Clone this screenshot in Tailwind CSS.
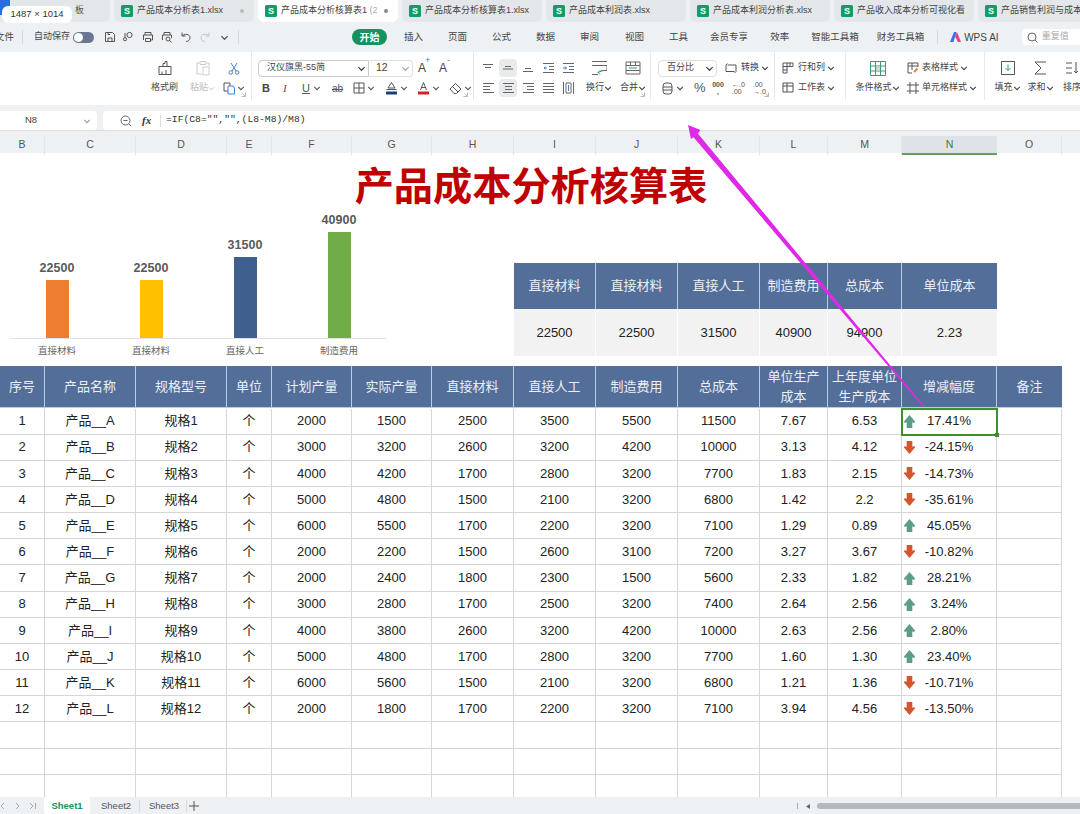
<!DOCTYPE html>
<html lang="zh-CN">
<head>
  <meta charset="UTF-8">
  <title>产品成本分析核算表</title>
  <script src="https://cdn.jsdelivr.net/npm/@tailwindcss/browser@4"></script>
</head>
<body class="relative w-[1080px] h-[814px] overflow-hidden bg-white text-[#444] font-['Liberation_Sans','Noto_Sans_CJK_SC',sans-serif]">
  <svg class="hidden">
    <defs>
      <symbol id="chev" viewBox="0 0 8 8"><path d="M1.2 2.8 4 5.6 6.8 2.8" fill="none" stroke="currentColor" stroke-width="1.1"/></symbol>
      <symbol id="xls" viewBox="0 0 12 12"><rect width="12" height="12" rx="1.5" fill="#0f9d6b"/><text x="6" y="9.4" text-anchor="middle" font-size="9" font-weight="700" fill="#fff" font-family="Liberation Sans">S</text></symbol>
      <symbol id="launch" viewBox="0 0 5 5"><path d="M0.5 4.5H4.5V0.5M1.5 1.5 4 4" fill="none" stroke="#999" stroke-width="0.7"/></symbol>
      <symbol id="up" viewBox="0 0 11 13"><path d="M5.5 0 11 6.5C11 8 9.5 8.3 8.3 7.2V13H2.7V7.2C1.5 8.3 0 8 0 6.5Z" fill="#5c9c8a"/></symbol>
      <symbol id="down" viewBox="0 0 11 13"><path d="M5.5 13 11 6.5C11 5 9.5 4.7 8.3 5.8V0H2.7V5.8C1.5 4.7 0 5 0 6.5Z" fill="#d3562f"/></symbol>
    </defs>
  </svg>

  <!-- Tabs -->
  <div class="h-[22px] bg-[#eef1f4] overflow-hidden">
    <div class="flex gap-1 ml-[-30px] w-[1200px] text-[9px]">
      <div class="w-[140px] h-[22px] rounded-b-md bg-[#e4e7ea] flex items-center pl-[105px] text-[#555]">板</div>
      <div class="w-[140px] h-[22px] rounded-b-md bg-[#e4e7ea] flex items-center pl-[7px] gap-[4px]"><svg class="w-3 h-3 shrink-0"><use href="#xls"/></svg><span class="flex-1 overflow-hidden whitespace-nowrap">产品成本分析表1.xlsx</span><span class="w-1 h-1 rounded-full bg-[#bbb] mr-[10px]"></span></div>
      <div class="w-[140px] h-[22px] rounded-b-md bg-white flex items-center pl-[7px] gap-[4px]"><svg class="w-3 h-3 shrink-0"><use href="#xls"/></svg><span class="flex-1 overflow-hidden whitespace-nowrap">产品成本分析核算表1 <span class="text-[#aaa]">(2</span></span><span class="w-1 h-1 rounded-full bg-[#888] mr-[10px]"></span></div>
      <div class="w-[140px] h-[22px] rounded-b-md bg-[#e4e7ea] flex items-center pl-[7px] gap-[4px]"><svg class="w-3 h-3 shrink-0"><use href="#xls"/></svg><span class="overflow-hidden whitespace-nowrap">产品成本分析核算表1.xlsx</span></div>
      <div class="w-[140px] h-[22px] rounded-b-md bg-[#e4e7ea] flex items-center pl-[7px] gap-[4px]"><svg class="w-3 h-3 shrink-0"><use href="#xls"/></svg><span class="overflow-hidden whitespace-nowrap">产品成本利润表.xlsx</span></div>
      <div class="w-[140px] h-[22px] rounded-b-md bg-[#e4e7ea] flex items-center pl-[7px] gap-[4px]"><svg class="w-3 h-3 shrink-0"><use href="#xls"/></svg><span class="overflow-hidden whitespace-nowrap">产品成本利润分析表.xlsx</span></div>
      <div class="w-[140px] h-[22px] rounded-b-md bg-[#e4e7ea] flex items-center pl-[7px] gap-[4px]"><svg class="w-3 h-3 shrink-0"><use href="#xls"/></svg><span class="overflow-hidden whitespace-nowrap">产品收入成本分析可视化看</span></div>
      <div class="w-[140px] h-[22px] rounded-b-md bg-[#e4e7ea] flex items-center pl-[7px] gap-[4px]"><svg class="w-3 h-3 shrink-0"><use href="#xls"/></svg><span class="overflow-hidden whitespace-nowrap">产品销售利润与成本分析</span></div>
    </div>
  </div>

  <!-- Menu bar -->
  <div class="h-[30px] bg-[#eef1f4] flex items-center overflow-hidden text-[9.5px] text-[#444] whitespace-nowrap [&>*]:shrink-0">
    <span class="w-[14px] overflow-hidden flex justify-end">文件</span>
    <span class="w-px h-[14px] bg-[#d8dbde] ml-[8px]"></span>
    <span class="ml-[11px] w-[39px] text-[9px]">自动保存</span>
    <span class="w-[21px] h-[11px] rounded-full bg-[#6b7694] flex items-center"><span class="w-[9px] h-[9px] rounded-full bg-white ml-px"></span></span>
    <svg class="w-[12px] h-[12px] ml-[10px]" viewBox="0 0 12 12" fill="none" stroke="#555"><path d="M1.5 1.5H8.5L10.5 3.5V10.5H1.5ZM4 10.5V7H8V10.5M4 1.5V3.5H6"/></svg>
    <svg class="w-[12px] h-[12px] ml-[6px]" viewBox="0 0 12 12" fill="none" stroke="#555"><circle cx="7.5" cy="4" r="2.6"/><circle cx="3" cy="8.2" r="1.6"/><path d="M3 6.6V2"/></svg>
    <svg class="w-[12px] h-[12px] ml-[8px]" viewBox="0 0 12 12" fill="none" stroke="#555"><path d="M3 4V1.5H9V4M1.5 9V4H10.5V9H8.5M3.5 7.5H8.5V10.5H3.5Z"/></svg>
    <svg class="w-[12px] h-[12px] ml-[7px]" viewBox="0 0 12 12" fill="none" stroke="#555"><path d="M3 4V1.5H9V4M1.5 9V4H10.5V7"/><circle cx="7" cy="8" r="2"/><path d="M8.5 9.5 10.5 11.2"/></svg>
    <svg class="w-[12px] h-[12px] ml-[7px]" viewBox="0 0 12 12" fill="none" stroke="#555"><path d="M2 1.5V5H5.5M2 5C4 2.5 10.5 2.5 10 7 9.8 9 8 10.5 6 10.5"/></svg>
    <svg class="w-[12px] h-[12px] ml-[7px]" viewBox="0 0 12 12" fill="none" stroke="#c5c8cb"><path d="M10 1.5V5H6.5M10 5C8 2.5 1.5 2.5 2 7 2.2 9 4 10.5 6 10.5"/></svg>
    <svg class="w-[9px] h-[9px] ml-[9px] text-[#555]"><use href="#chev"/></svg>
    <span class="w-px h-[14px] bg-[#d8dbde] ml-[9px]"></span>
    <span class="ml-[113px] w-[35px] h-[16px] rounded-full bg-[#17915f] text-white font-bold text-[10px] flex items-center justify-center">开始</span>
    <span class="ml-[17px]">插入</span>
    <span class="ml-[25px]">页面</span>
    <span class="ml-[25px]">公式</span>
    <span class="ml-[25px]">数据</span>
    <span class="ml-[25px]">审阅</span>
    <span class="ml-[26px]">视图</span>
    <span class="ml-[25px]">工具</span>
    <span class="ml-[22px]">会员专享</span>
    <span class="ml-[22px]">效率</span>
    <span class="ml-[22px]">智能工具箱</span>
    <span class="ml-[18px]">财务工具箱</span>
    <span class="w-px h-[14px] bg-[#d8dbde] ml-[13px]"></span>
    <svg class="w-[11px] h-[10px] ml-[12px]" viewBox="0 0 11 10"><path d="M0 10 4 0H6.5L3.5 10Z" fill="#3b6ff0"/><path d="M5 4.5 7 0 11 10H8Z" fill="#e0457b"/></svg>
    <span class="ml-[3px] text-[10px]">WPS AI</span>
    <span class="ml-[23px] w-[62px] h-[16px] rounded-l bg-white flex items-center pl-[5px] gap-[4px] text-[9px] text-[#aaa]"><svg class="w-[11px] h-[11px] shrink-0" viewBox="0 0 11 11" fill="none" stroke="#666"><circle cx="5" cy="5" r="4"/><path d="M8 8 10.5 10.5"/></svg>重复值</span>
  </div>

  <!-- Ribbon -->
  <div class="h-[53px] bg-white flex text-[9px] text-[#444] whitespace-nowrap">
    <div class="w-[150px] shrink-0"></div>

    <div class="w-[102px] shrink-0 h-[48px] border-r border-[#e6e8ea] relative flex pt-[6px]">
      <div class="w-[27px] ml-px grid grid-rows-[20px_20px] justify-items-center items-center">
        <svg class="w-[16px] h-[16px]" viewBox="0 0 16 16" fill="none" stroke="#555"><path d="M2 6.5H14V14.5H2ZM6 6.5V3.5H8V1.5H10V6.5M5 14.5V11.5M9 14.5V10"/></svg>
        <span>格式刷</span>
      </div>
      <div class="w-[33px] ml-[8px] grid grid-rows-[20px_20px] justify-items-center items-center text-[#bbb]">
        <svg class="w-[16px] h-[16px]" viewBox="0 0 16 16" fill="none" stroke="#ccc"><path d="M4.5 3H2V14H7M11.5 3H14V6M5 4.5V1.5H11V4.5ZM8 7H14V15H8Z"/></svg>
        <span class="flex items-center">粘贴<svg class="w-[7px] h-[7px]"><use href="#chev"/></svg></span>
      </div>
      <div class="w-[30px] grid grid-rows-[20px_20px] justify-items-center items-center">
        <svg class="w-[12px] h-[13px]" viewBox="0 0 12 13" fill="none" stroke="#4a7fc4"><path d="M3 1 8 9M9 1 4 9"/><circle cx="2.8" cy="10.5" r="1.8"/><circle cx="9.2" cy="10.5" r="1.8"/></svg>
        <span class="flex items-center gap-[2px]"><svg class="w-[12px] h-[13px]" viewBox="0 0 12 13" fill="none" stroke="#555"><path d="M1 1H7V9H1Z"/><path d="M5 4H10L11.5 6V12H5Z" stroke="#3f7ed8" fill="#fff"/></svg><svg class="w-[8px] h-[8px] text-[#555]"><use href="#chev"/></svg></span>
      </div>
      <svg class="absolute right-[5px] bottom-[3px] w-[5px] h-[5px]"><use href="#launch"/></svg>
    </div>

    <div class="w-[222px] shrink-0 h-[48px] border-r border-[#e6e8ea] relative pt-[6px] grid grid-rows-[20px_20px]">
      <div class="flex items-center pl-[6px]">
        <div class="w-[111px] h-[17px] border border-[#c9cccf] rounded-l flex items-center pl-[8px] pr-[2px] justify-between">汉仪旗黑-55简<svg class="w-[9px] h-[9px]"><use href="#chev"/></svg></div>
        <div class="w-[44px] h-[17px] border border-l-0 border-[#dcdfe2] rounded-r flex items-center pl-[7px] pr-[2px] justify-between text-[10.5px]">12<svg class="w-[9px] h-[9px] text-[#aaa]"><use href="#chev"/></svg></div>
        <span class="ml-[5px] text-[12px] w-[14px] relative">A<span class="absolute top-[-5px] left-[7px] text-[9px] text-[#3f7ed8]">+</span></span>
        <span class="ml-[7px] text-[12px] w-[14px] relative">A<span class="absolute top-[-5px] left-[8px] text-[9px] text-[#777]">-</span></span>
      </div>
      <div class="flex items-center text-[#555]">
        <span class="ml-[10px] w-[8px] font-bold text-[11px] text-[#444]">B</span>
        <span class="ml-[13px] w-[6px] italic text-[11px] font-['Liberation_Serif']">I</span>
        <span class="ml-[13px] w-[8px] underline text-[11px]">U</span>
        <svg class="w-[8px] h-[8px] ml-[3px]"><use href="#chev"/></svg>
        <span class="ml-[11px] w-[13px] line-through text-[10px]">ab</span>
        <svg class="w-[12px] h-[12px] ml-[8px]" viewBox="0 0 12 12" fill="none" stroke="#555"><path d="M1 1H11V11H1ZM6 1V11M1 6H11"/></svg>
        <svg class="w-[8px] h-[8px] ml-[2px]"><use href="#chev"/></svg>
        <svg class="w-[13px] h-[14px] ml-[10px]" viewBox="0 0 13 14"><path d="M3 7 6.5 1.5 10 7Z" fill="none" stroke="#555"/><path d="M1.5 8.5H11.5" stroke="#555"/><rect x="1" y="10.5" width="11" height="3" fill="#1c3f7c"/></svg>
        <svg class="w-[8px] h-[8px] ml-[2px]"><use href="#chev"/></svg>
        <svg class="w-[13px] h-[14px] ml-[9px]" viewBox="0 0 13 14"><path d="M3.5 9 6.5 1.5 9.5 9M4.5 6.5H8.5" fill="none" stroke="#555"/><rect x="1" y="10.5" width="11" height="3" fill="#d6202a"/></svg>
        <svg class="w-[8px] h-[8px] ml-[2px]"><use href="#chev"/></svg>
        <svg class="w-[13px] h-[13px] ml-[9px]" viewBox="0 0 13 13" fill="none" stroke="#555"><path d="M1 7 6.5 1.5 12 7 7.5 11.5H5Z"/><path d="M3.5 4.5 9 10"/></svg>
        <svg class="w-[8px] h-[8px] ml-[2px]"><use href="#chev"/></svg>
      </div>
      <svg class="absolute right-[5px] bottom-[3px] w-[5px] h-[5px]"><use href="#launch"/></svg>
    </div>

    <div class="w-[177px] shrink-0 h-[48px] border-r border-[#e6e8ea] relative pt-[6px] flex">
      <div class="ml-[4px] grid grid-cols-[20px_20px_20px_20px_20px] grid-rows-[20px_20px] justify-items-center items-center">
        <svg class="w-[10px] h-[8px]" viewBox="0 0 10 8" stroke="#666"><path d="M0 .5H10M2 3.5H8"/></svg>
        <span class="w-[18px] h-[18px] bg-[#e8eaec] rounded-sm flex items-center justify-center"><svg class="w-[10px] h-[8px]" viewBox="0 0 10 8" stroke="#666"><path d="M2 2.5H8M0 5H10"/></svg></span>
        <svg class="w-[10px] h-[8px]" viewBox="0 0 10 8" stroke="#666"><path d="M2 4.5H8M0 7.5H10"/></svg>
        <svg class="w-[11px] h-[10px]" viewBox="0 0 11 10" fill="none" stroke="#666"><path d="M0 .5H11M6 3.5H11M6 6.5H11M0 9.5H11"/><path d="M4 5H1M2.5 3.5 1 5 2.5 6.5" stroke="#3f7ed8"/></svg>
        <svg class="w-[11px] h-[10px]" viewBox="0 0 11 10" fill="none" stroke="#666"><path d="M0 .5H11M6 3.5H11M6 6.5H11M0 9.5H11"/><path d="M0 5H3.5M2 3.5 3.5 5 2 6.5" stroke="#3f7ed8"/></svg>
        <svg class="w-[11px] h-[10px]" viewBox="0 0 11 10" stroke="#666"><path d="M0 .5H11M0 3.5H7M0 6.5H7M0 9.5H11"/></svg>
        <span class="w-[18px] h-[18px] bg-[#e8eaec] rounded-sm flex items-center justify-center"><svg class="w-[11px] h-[10px]" viewBox="0 0 11 10" stroke="#666"><path d="M0 .5H11M2 3.5H9M2 6.5H9M0 9.5H11"/></svg></span>
        <svg class="w-[11px] h-[10px]" viewBox="0 0 11 10" stroke="#666"><path d="M0 .5H11M4 3.5H11M4 6.5H11M0 9.5H11"/></svg>
        <svg class="w-[11px] h-[10px]" viewBox="0 0 11 10" stroke="#666"><path d="M0 .5H11M0 3.5H11M0 6.5H11M0 9.5H11"/></svg>
        <svg class="w-[11px] h-[12px]" viewBox="0 0 11 12" fill="none" stroke="#666"><path d="M.5 0V12M10.5 0V12M3 1H8V11H3Z"/><path d="M5.5 3V9" stroke="#3f7ed8"/></svg>
      </div>
      <div class="w-[36px] ml-[3px] grid grid-rows-[20px_20px] justify-items-center items-center">
        <svg class="w-[15px] h-[14px]" viewBox="0 0 15 14" fill="none" stroke="#666"><path d="M0 .5H15M0 4.5H15V9.5H9M0 13.5H6"/><path d="M11 9.5 6 11.5M8 9.5 6 11.5 8 13.5" stroke="#2f9e6b"/></svg>
        <span class="flex items-center">换行<svg class="w-[8px] h-[8px]"><use href="#chev"/></svg></span>
      </div>
      <div class="w-[32px] grid grid-rows-[20px_20px] justify-items-center items-center">
        <svg class="w-[16px] h-[14px]" viewBox="0 0 16 14" fill="none" stroke="#666"><path d="M1 1H15V13H1ZM5.5 1V4.5M10.5 1V4.5M1 4.5H15M1 9.5H15"/><path d="M4 7H12" stroke="#2f9e6b"/></svg>
        <span class="flex items-center">合并<svg class="w-[8px] h-[8px]"><use href="#chev"/></svg></span>
      </div>
      <svg class="absolute right-[5px] bottom-[3px] w-[5px] h-[5px]"><use href="#launch"/></svg>
    </div>

    <div class="w-[124px] shrink-0 h-[48px] border-r border-[#e6e8ea] relative pt-[6px] grid grid-rows-[20px_20px]">
      <div class="flex items-center pl-[7px]">
        <div class="w-[59px] h-[17px] border border-[#dcdfe2] rounded flex items-center pl-[8px] pr-[2px] justify-between">百分比<svg class="w-[9px] h-[9px]"><use href="#chev"/></svg></div>
        <svg class="w-[12px] h-[12px] ml-[8px]" viewBox="0 0 12 12" fill="none" stroke="#555"><path d="M2.5 3H11V9.5M9.5 9.5H1V3M1 3 2.5 1.5M11 9.5 9.5 11"/></svg>
        <span class="ml-[4px]">转换</span>
        <svg class="w-[8px] h-[8px] ml-[2px]"><use href="#chev"/></svg>
      </div>
      <div class="flex items-center">
        <svg class="w-[11px] h-[13px] ml-[11px]" viewBox="0 0 11 13" fill="none" stroke="#555"><rect x="1" y="1" width="9" height="11" rx="3"/><path d="M1 5H10M1 8H10"/></svg>
        <svg class="w-[8px] h-[8px] ml-[3px]"><use href="#chev"/></svg>
        <span class="ml-[10px] w-[14px] text-[13px] text-[#555] font-light">%</span>
        <span class="ml-[4px] w-[12px] text-[7px] font-bold leading-[7px] text-center text-[#555]">000<br>,</span>
        <span class="ml-[8px] w-[12px] text-[7px] leading-[7px] text-[#555]">←.0<br>.00</span>
        <span class="ml-[9px] w-[12px] text-[7px] leading-[7px] text-[#555]">.00<br>→.0</span>
      </div>
      <svg class="absolute right-[5px] bottom-[3px] w-[5px] h-[5px]"><use href="#launch"/></svg>
    </div>

    <div class="w-[71px] shrink-0 h-[48px] border-r border-[#e6e8ea] pt-[6px] grid grid-rows-[20px_20px]">
      <div class="flex items-center pl-[7px]">
        <svg class="w-[12px] h-[12px]" viewBox="0 0 12 12" fill="none" stroke="#555"><path d="M1 1H11V4.5H5V11H1ZM5 1V4.5M8 1V4.5M1 4.5H5M1 8H5"/></svg>
        <span class="ml-[4px]">行和列</span>
        <svg class="w-[8px] h-[8px] ml-[2px]"><use href="#chev"/></svg>
      </div>
      <div class="flex items-center pl-[7px]">
        <svg class="w-[12px] h-[12px]" viewBox="0 0 12 12" fill="none" stroke="#555"><path d="M1 1H11V10H1ZM1 4H11M5 1V10"/></svg>
        <span class="ml-[4px]">工作表</span>
        <svg class="w-[8px] h-[8px] ml-[2px]"><use href="#chev"/></svg>
      </div>
    </div>

    <div class="w-[139px] shrink-0 h-[48px] border-r border-[#e6e8ea] pt-[6px] flex">
      <div class="w-[47px] ml-[8px] grid grid-rows-[20px_20px] justify-items-center items-center">
        <svg class="w-[16px] h-[15px]" viewBox="0 0 16 15" fill="none" stroke="#3a9a72"><path d="M.5.5H15.5V14.5H.5ZM5.5.5V14.5M10.5.5V14.5M.5 5H15.5M.5 10H15.5"/><rect x="6" y="5.5" width="4" height="4" fill="#bfe3d2" stroke="none"/></svg>
        <span class="flex items-center">条件格式<svg class="w-[8px] h-[8px]"><use href="#chev"/></svg></span>
      </div>
      <div class="grid grid-rows-[20px_20px] ml-[6px] items-center">
        <div class="flex items-center">
          <svg class="w-[12px] h-[12px]" viewBox="0 0 12 12" fill="none" stroke="#555"><path d="M5 11H1V1H11V5M1 4H11M5 1V8"/><path d="M7 10 10.5 6.5" stroke="#e0833a" stroke-width="2"/></svg>
          <span class="ml-[3px]">表格样式</span>
          <svg class="w-[8px] h-[8px] ml-[2px]"><use href="#chev"/></svg>
        </div>
        <div class="flex items-center">
          <svg class="w-[12px] h-[12px]" viewBox="0 0 12 12" fill="none" stroke="#555"><path d="M3 0V12M9 0V12M0 3H12M0 9H12"/></svg>
          <span class="ml-[3px]">单元格样式</span>
          <svg class="w-[8px] h-[8px] ml-[2px]"><use href="#chev"/></svg>
        </div>
      </div>
    </div>

    <div class="flex-1 min-w-0 pt-[6px] flex overflow-hidden">
      <div class="w-[33px] ml-[6px] shrink-0 grid grid-rows-[20px_20px] justify-items-center items-center">
        <svg class="w-[14px] h-[14px]" viewBox="0 0 14 14" fill="none" stroke="#555"><path d="M.5.5H13.5V13.5H.5Z"/><path d="M7 3.5V9.5M4.5 7 7 9.5 9.5 7" stroke="#2f9e6b"/></svg>
        <span class="flex items-center">填充<svg class="w-[8px] h-[8px]"><use href="#chev"/></svg></span>
      </div>
      <div class="w-[33px] shrink-0 grid grid-rows-[20px_20px] justify-items-center items-center">
        <svg class="w-[13px] h-[14px]" viewBox="0 0 13 14" fill="none" stroke="#555"><path d="M12 1H1L7 7 1 13H12"/></svg>
        <span class="flex items-center">求和<svg class="w-[8px] h-[8px]"><use href="#chev"/></svg></span>
      </div>
      <div class="w-[30px] shrink-0 grid grid-rows-[20px_20px] justify-items-center items-center">
        <svg class="w-[14px] h-[14px]" viewBox="0 0 14 14" fill="none" stroke="#555"><path d="M1 2H7M1 7H7M1 12H7M11 1V12M9 10 11 12 13 10"/></svg>
        <span>排序</span>
      </div>
    </div>
  </div>

  <!-- Formula bar -->
  <div class="h-[26px] bg-[#eef1f4] flex items-end gap-[6px] border-b border-[#dcdfe2]">
    <div class="w-[97px] h-[19px] bg-white rounded-r flex items-center text-[9.5px] text-[#444]">
      <span class="ml-[25px] flex-1">N8</span>
      <svg class="w-[8px] h-[8px] mr-[6px] text-[#999]"><use href="#chev"/></svg>
    </div>
    <div class="flex-1 h-[19px] bg-white rounded-l flex items-center">
      <svg class="w-[12px] h-[12px] ml-[17px]" viewBox="0 0 12 12" fill="none" stroke="#666"><circle cx="5.5" cy="5.5" r="4.5"/><path d="M3.5 5.5H7.5M9 9 11 11"/></svg>
      <span class="ml-[10px] w-[12px] italic font-bold text-[11px] text-[#333] font-['Liberation_Serif']">fx</span>
      <span class="ml-[6px] w-px h-[12px] bg-[#ddd]"></span>
      <span class="ml-[5px] text-[9.7px] text-[#333] font-['Liberation_Mono']">=IF(C8="","",(L8-M8)/M8)</span>
    </div>
  </div>

  <!-- Column letters -->
  <div class="h-[22px] bg-[#eef1f4] flex flex-col justify-end">
    <div class="h-[17px] grid grid-cols-[45px_91px_91px_45px_80px_80px_82px_82px_82px_82px_68px_74px_95px_65px] text-[10.5px] text-[#555] text-center leading-[17px]">
      <div class="border-r border-[#e3e6e9]">B</div><div class="border-r border-[#e3e6e9]">C</div><div class="border-r border-[#e3e6e9]">D</div><div class="border-r border-[#e3e6e9]">E</div><div class="border-r border-[#e3e6e9]">F</div><div class="border-r border-[#e3e6e9]">G</div><div class="border-r border-[#e3e6e9]">H</div><div class="border-r border-[#e3e6e9]">I</div><div class="border-r border-[#e3e6e9]">J</div><div class="border-r border-[#e3e6e9]">K</div><div class="border-r border-[#e3e6e9]">L</div><div class="border-r border-[#e3e6e9]">M</div>
      <div class="bg-[#dfe3e8] border-b-2 border-[#6a9e5f] text-[#2e7d4f]">N</div>
      <div class="border-r border-[#e3e6e9]">O</div>
    </div>
  </div>

  <!-- Sheet -->
  <div class="h-[644px] overflow-hidden">
    <div class="h-[60px] w-[1062px] flex justify-center pt-[14px]">
      <h1 class="text-[39.2px] leading-[39px] font-bold text-[#c00000]">产品成本分析核算表</h1>
    </div>
    <div class="h-[153px] flex">
      <!-- Chart -->
      <div class="ml-[10px] w-[377px]">
        <div class="h-[126px] flex items-end border-b border-[#e2e2e2]">
          <div class="w-[94px] flex flex-col items-center"><span class="text-[12.5px] font-bold text-[#595959] leading-[14px] mb-[5px]">22500</span><div class="w-[23px] h-[58px] bg-[#ed7d31]"></div></div>
          <div class="w-[94px] flex flex-col items-center"><span class="text-[12.5px] font-bold text-[#595959] leading-[14px] mb-[5px]">22500</span><div class="w-[23px] h-[58px] bg-[#ffc000]"></div></div>
          <div class="w-[94px] flex flex-col items-center"><span class="text-[12.5px] font-bold text-[#595959] leading-[14px] mb-[5px]">31500</span><div class="w-[23px] h-[81px] bg-[#3f5f8f]"></div></div>
          <div class="w-[94px] flex flex-col items-center"><span class="text-[12.5px] font-bold text-[#595959] leading-[14px] mb-[5px]">40900</span><div class="w-[23px] h-[106px] bg-[#70ad47]"></div></div>
        </div>
        <div class="flex text-[9.5px] text-[#666] mt-[5px] leading-[13px]">
          <span class="w-[94px] text-center">直接材料</span><span class="w-[94px] text-center">直接材料</span><span class="w-[94px] text-center">直接人工</span><span class="w-[94px] text-center">制造费用</span>
        </div>
      </div>
      <!-- Summary -->
      <div class="ml-[127px] mt-[50px] w-[483px] h-[93px] grid grid-cols-[82px_82px_82px_68px_74px_95px] grid-rows-[46px_47px] text-[13px] text-center">
        <div class="bg-[#546e9a] border-r border-[#b9cde0] text-[#eaf0f6] flex items-center justify-center">直接材料</div>
        <div class="bg-[#546e9a] border-r border-[#b9cde0] text-[#eaf0f6] flex items-center justify-center">直接材料</div>
        <div class="bg-[#546e9a] border-r border-[#b9cde0] text-[#eaf0f6] flex items-center justify-center">直接人工</div>
        <div class="bg-[#546e9a] border-r border-[#b9cde0] text-[#eaf0f6] flex items-center justify-center">制造费用</div>
        <div class="bg-[#546e9a] border-r border-[#b9cde0] text-[#eaf0f6] flex items-center justify-center">总成本</div>
        <div class="bg-[#546e9a] text-[#eaf0f6] flex items-center justify-center">单位成本</div>
        <div class="bg-[#f2f2f2] border-r border-white text-[#222] flex items-center justify-center">22500</div>
        <div class="bg-[#f2f2f2] border-r border-white text-[#222] flex items-center justify-center">22500</div>
        <div class="bg-[#f2f2f2] border-r border-white text-[#222] flex items-center justify-center">31500</div>
        <div class="bg-[#f2f2f2] border-r border-white text-[#222] flex items-center justify-center">40900</div>
        <div class="bg-[#f2f2f2] border-r border-white text-[#222] flex items-center justify-center">94900</div>
        <div class="bg-[#f2f2f2] text-[#222] flex items-center justify-center">2.23</div>
      </div>
    </div>

    <!-- Table header -->
    <div class="w-[1062px] h-[42px] grid grid-cols-[45px_91px_91px_45px_80px_80px_82px_82px_82px_82px_68px_74px_95px_65px] bg-[#546e9a] text-[#eaf0f6] text-[13px] text-center leading-[20px]">
      <div class="border-r border-b border-[#b9cde0] flex items-center justify-center">序号</div>
      <div class="border-r border-b border-[#b9cde0] flex items-center justify-center">产品名称</div>
      <div class="border-r border-b border-[#b9cde0] flex items-center justify-center">规格型号</div>
      <div class="border-r border-b border-[#b9cde0] flex items-center justify-center">单位</div>
      <div class="border-r border-b border-[#b9cde0] flex items-center justify-center">计划产量</div>
      <div class="border-r border-b border-[#b9cde0] flex items-center justify-center">实际产量</div>
      <div class="border-r border-b border-[#b9cde0] flex items-center justify-center">直接材料</div>
      <div class="border-r border-b border-[#b9cde0] flex items-center justify-center">直接人工</div>
      <div class="border-r border-b border-[#b9cde0] flex items-center justify-center">制造费用</div>
      <div class="border-r border-b border-[#b9cde0] flex items-center justify-center">总成本</div>
      <div class="border-r border-b border-[#b9cde0] flex items-center justify-center">单位生产<br>成本</div>
      <div class="border-r border-b border-[#b9cde0] flex items-center justify-center">上年度单位<br>生产成本</div>
      <div class="border-r border-b border-[#b9cde0] flex items-center justify-center">增减幅度</div>
      <div class="border-b border-[#b9cde0] flex items-center justify-center">备注</div>
    </div>
    <!-- Table body, filled in below -->
    <div id="rows" class="w-[1062px] pt-[0.5px] grid grid-cols-[45px_91px_91px_45px_80px_80px_82px_82px_82px_82px_68px_74px_95px_65px] auto-rows-[26.17px] text-[13px] text-[#222] text-center"></div>
  </div>

  <!-- Sheet tabs -->
  <div class="h-[18px] bg-[#eef1f4] flex items-center text-[9.5px] text-[#555] relative">
    <svg class="w-[38px] h-[10px] shrink-0 ml-px" viewBox="0 0 38 10" fill="none" stroke="#aaa"><path d="M3 2 0 5 3 8M15 2 18 5 15 8M29 2 32 5 29 8M34.5 2V8"/></svg>
    <span class="ml-[5px] w-[46px] h-[18px] bg-white rounded-b text-[#17915f] font-bold flex items-center justify-center">Sheet1</span>
    <span class="ml-[11px] w-[29px]">Sheet2</span>
    <span class="ml-[9px] w-px h-[12px] bg-[#d8dbde]"></span>
    <span class="ml-[9px] w-[29px]">Sheet3</span>
    <span class="ml-[8px] w-px h-[12px] bg-[#d8dbde]"></span>
    <svg class="w-[10px] h-[10px] ml-[2px]" viewBox="0 0 10 10" stroke="#555"><path d="M5 0V10M0 5H10"/></svg>
    <span class="ml-[598px] w-px h-[6px] bg-[#aaa]"></span>
    <svg class="w-[5px] h-[5px] ml-[8px]" viewBox="0 0 5 5"><path d="M4 0V5L0 2.5Z" fill="#666"/></svg>
    <span class="ml-[6px] flex-1 h-[6px] rounded-l-full bg-[#b5b8bc]"></span>
  </div>

  <!-- Size tag -->
  <div class="absolute left-0 top-0 w-[10px] h-[15px] rounded-br-md bg-[#2b6de0]"></div>
  <div class="absolute left-[2px] top-[6px] w-[70px] h-[17px] rounded-md bg-white flex items-center justify-center text-[9.5px] text-[#333]">1487 × 1014</div>

  <!-- Annotation arrow -->
  <svg class="absolute left-0 top-0 w-[1080px] h-[814px] pointer-events-none" viewBox="0 0 1080 814">
    <path d="M688 125 700.5 130 697.8 133.5 924 406 922.8 406.8 693.5 137.2 691 139Z" fill="#e028e8"/>
  </svg>

  <script>
    // rows of the cost table: no, name, spec, then the numbers
    const data = [
      ['1','产品__A','规格1','2000','1500','2500','3500','5500','11500','7.67','6.53','17.41%'],
      ['2','产品__B','规格2','3000','3200','2600','3200','4200','10000','3.13','4.12','-24.15%'],
      ['3','产品__C','规格3','4000','4200','1700','2800','3200','7700','1.83','2.15','-14.73%'],
      ['4','产品__D','规格4','5000','4800','1500','2100','3200','6800','1.42','2.2','-35.61%'],
      ['5','产品__E','规格5','6000','5500','1700','2200','3200','7100','1.29','0.89','45.05%'],
      ['6','产品__F','规格6','2000','2200','1500','2600','3100','7200','3.27','3.67','-10.82%'],
      ['7','产品__G','规格7','2000','2400','1800','2300','1500','5600','2.33','1.82','28.21%'],
      ['8','产品__H','规格8','3000','2800','1700','2500','3200','7400','2.64','2.56','3.24%'],
      ['9','产品__I','规格9','4000','3800','2600','3200','4200','10000','2.63','2.56','2.80%'],
      ['10','产品__J','规格10','5000','4800','1700','2800','3200','7700','1.60','1.30','23.40%'],
      ['11','产品__K','规格11','6000','5600','1500','2100','3200','6800','1.21','1.36','-10.71%'],
      ['12','产品__L','规格12','2000','1800','1700','2200','3200','7100','3.94','4.56','-13.50%']
    ];
    const cell = 'border-r border-b border-[#d6d6d6] flex items-center justify-center';
    let html = '';
    data.forEach((r, i) => {
      const nums = r.slice(3, 11);
      html += `<div class="${cell}">${r[0]}</div><div class="${cell}">${r[1]}</div><div class="${cell}">${r[2]}</div><div class="${cell}">个</div>`;
      nums.forEach(n => { html += `<div class="${cell}">${n}</div>`; });
      const icon = r[11].startsWith('-') ? 'down' : 'up';
      const sel = i === 0 ? 'relative outline-2 -outline-offset-1 outline-[#3f8f2f] z-10' : '';
      const handle = i === 0 ? '<span class="absolute right-[-3px] bottom-[-3px] w-[4px] h-[4px] bg-[#3f8f2f]"></span>' : '';
      html += `<div class="${cell} ${sel}"><svg class="w-[11px] h-[13px] ml-[2px] shrink-0"><use href="#${icon}"/></svg><span class="flex-1 pr-[13px]">${r[11]}</span>${handle}</div><div class="${cell}"></div>`;
    });
    for (let i = 0; i < 3 * 14; i++) html += `<div class="${cell}"></div>`;
    document.getElementById('rows').innerHTML = html;
  </script>
</body>
</html>
